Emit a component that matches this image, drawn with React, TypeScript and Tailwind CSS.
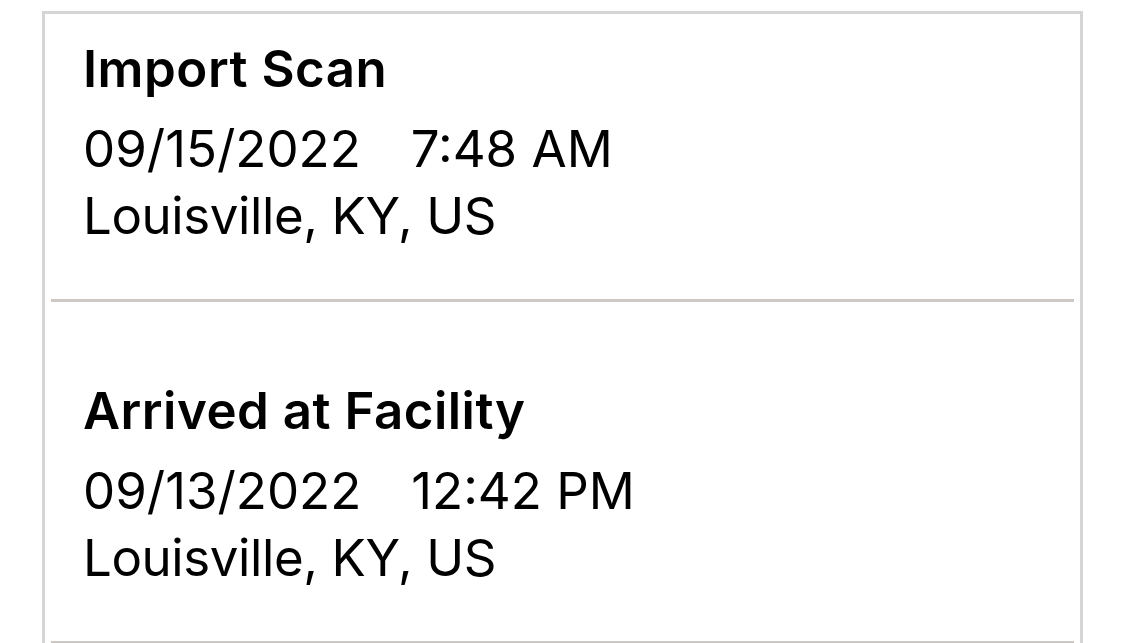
export default function App() {
  const events = [
    { title: "Import Scan", date: "09/15/2022", time: "7:48 AM", place: "Louisville, KY, US", pad: "pt-[21px]" },
    { title: "Arrived at Facility", date: "09/13/2022", time: "12:42 PM", place: "Louisville, KY, US", pad: "pt-[75px]" },
  ]

  return (
    <div className="min-h-screen bg-white px-[42px] pt-[11px] overflow-hidden h-[643px]" style={{ fontFamily: "Inter, 'Noto Sans', sans-serif" }}>
      <div className="border-[3px] border-b-0 border-[#d5d5d5] px-[6px]">
        {events.map((ev, i) => (
          <div key={i} className={`${ev.pad} pb-[50px] pl-[32px] border-b-[3px] border-[#cdc8c3] text-black`}>
            <div className="text-[51px] leading-[67px] font-semibold tracking-[0.5px]">{ev.title}</div>
            <div className="mt-[13px] text-[51px] leading-[67px] flex">
              <span>{ev.date}</span>
              <span className="ml-[50px]">{ev.time}</span>
            </div>
            <div className="text-[51px] leading-[67px] tracking-[-0.4px]">{ev.place}</div>
          </div>
        ))}
      </div>
    </div>
  )
}
